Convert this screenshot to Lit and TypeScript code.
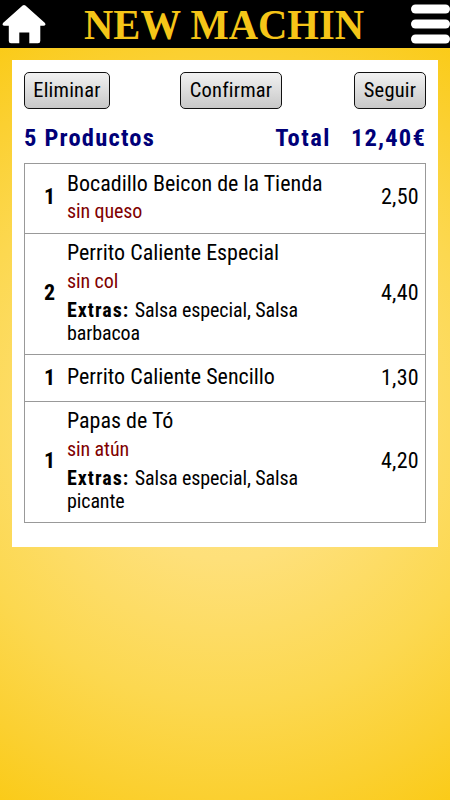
import { LitElement, html, css, nothing } from "lit";
import { customElement } from "lit/decorators.js";

interface Item { qty: number; name: string; without?: string; extras?: string[]; price: string; }

const ITEMS: Item[] = [
  { qty: 1, name: "Bocadillo Beicon de la Tienda", without: "sin queso", price: "2,50" },
  { qty: 2, name: "Perrito Caliente Especial", without: "sin col", extras: ["Salsa especial, Salsa", "barbacoa"], price: "4,40" },
  { qty: 1, name: "Perrito Caliente Sencillo", price: "1,30" },
  { qty: 1, name: "Papas de Tó", without: "sin atún", extras: ["Salsa especial, Salsa", "picante"], price: "4,20" },
];

@customElement("app-root")
export class AppRoot extends LitElement {
  static styles = css`
    :host {
      display: block; height: 800px; overflow: hidden; color: #000;
      font-family: "Roboto Condensed", Roboto, sans-serif; font-stretch: 75%;
      background: radial-gradient(circle 465px at 225px 424px, #ffe685 0%, #fee07a 29%, #fcd850 60%, #fbd031 80%, #fac90f 100%);
    }
    .bar { height: 48px; background: #000; display: flex; justify-content: space-between; }
    .home { width: 50px; height: 48px; }
    .menu { width: 40px; height: 48px; }
    .brand { width: 300px; height: 48px; font-family: "Liberation Serif", serif; font-weight: 700; font-size: 41.5px; fill: #f5c518; }
    .card { margin: 12px 12px 0; height: 487px; padding: 12px; box-sizing: border-box; background: #fff; }
    .actions { display: flex; height: 37px; }
    button {
      font: inherit; font-size: 20.5px; height: 37px; padding: 0 0 1px; letter-spacing: 0.2px; border: 1px solid #111; border-radius: 5px;
      background: linear-gradient(#f1f1f1, #c8c8c8); color: #000; white-space: nowrap;
    }
    .eliminar { width: 86px; } .confirmar { width: 102px; margin-left: 70px; } .seguir { width: 72px; margin-left: auto; }
    .summary { display: flex; height: 54px; line-height: 58px; font-size: 24.5px; font-weight: 700; color: #000078; letter-spacing: 1.2px; }
    .total { margin-left: auto; margin-right: 20px; letter-spacing: 1.5px; }
    .sum { letter-spacing: 1.2px; }
    .list { border: 1px solid #999; border-bottom: 0; }
    .row { display: grid; grid-template-columns: 42px 1fr auto; align-items: center; border-bottom: 1px solid #999; box-sizing: border-box; height: 47px; padding-bottom: 2px; }
    .row.short { height: 70px; }
    .row.tall { height: 121px; padding-bottom: 4px; }
    .qty { text-align: right; padding-right: 12px; font-weight: 700; font-size: 22px; }
    .price { padding-right: 6px; font-size: 22px; letter-spacing: 0.3px; }
    .short .qty, .short .price { padding-bottom: 2px; }
    .name { font-size: 22px; line-height: 28px; white-space: nowrap; }
    .short .name { line-height: 29px; }
    .without { font-size: 20px; line-height: 29px; color: #800000; letter-spacing: -0.1px; }
    .short .without { margin-top: -1px; }
    .extras { font-size: 20px; line-height: 23px; padding-top: 3px; letter-spacing: -0.1px; }
    .extras div { white-space: nowrap; }
    b { letter-spacing: 1px; margin-right: 1px; }
  `;

  render() {
    return html`
      <header class="bar">
        <svg class="home" viewBox="0 0 50 48"><path fill="#fff" d="M22.6 5.6Q24 4.2 25.4 5.6L45 23Q46.4 25.6 43.5 25.8H40.3V41Q40.3 43.2 38 43.2H29.3V32.5H19.3V43.2H11Q8.8 43.2 8.8 41V25.8H4.5Q1.6 25.6 3 23Z"/></svg>
        <svg class="brand" viewBox="0 0 300 48"><text x="4" y="38.5" textLength="280" lengthAdjust="spacingAndGlyphs">NEW MACHIN</text></svg>
        <svg class="menu" viewBox="0 0 40 48" fill="#fff"><rect x="1" y="4.5" width="39" height="9" rx="4.5"/><rect x="1" y="19.5" width="39" height="9" rx="4.5"/><rect x="1" y="34.5" width="39" height="9" rx="4.5"/></svg>
      </header>
      <main class="card">
        <div class="actions">
          <button class="eliminar">Eliminar</button>
          <button class="confirmar">Confirmar</button>
          <button class="seguir">Seguir</button>
        </div>
        <div class="summary"><span>5 Productos</span><span class="total">Total</span><span class="sum">12,40€</span></div>
        <div class="list">
          ${ITEMS.map((it) => html`
            <div class="row ${it.extras ? "tall" : it.without ? "short" : ""}">
              <div class="qty">${it.qty}</div>
              <div>
                <div class="name">${it.name}</div>
                ${it.without ? html`<div class="without">${it.without}</div>` : nothing}
                ${it.extras ? html`<div class="extras"><div><b>Extras:</b> ${it.extras[0]}</div><div>${it.extras[1]}</div></div>` : nothing}
              </div>
              <div class="price">${it.price}</div>
            </div>`)}
        </div>
      </main>`;
  }
}
